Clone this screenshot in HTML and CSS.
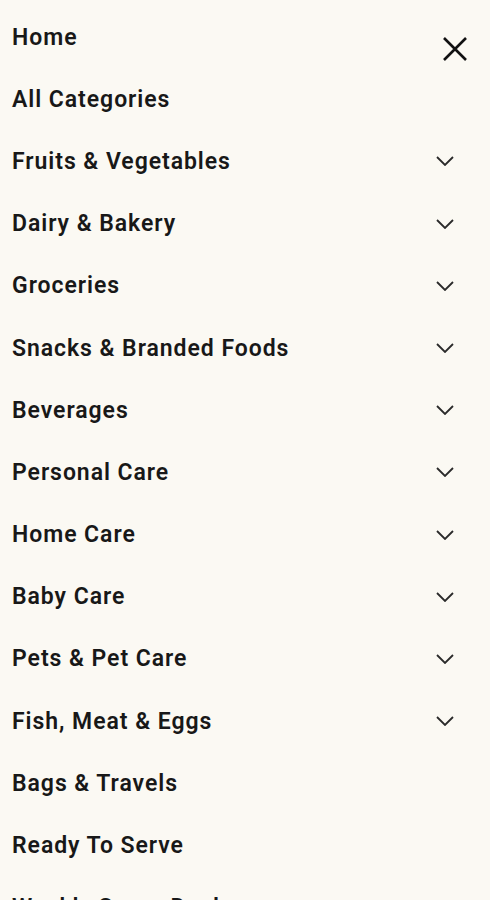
FILE: index.html
```html
<!DOCTYPE html>
<html lang="en">
<head>
<meta charset="utf-8">
<title>Menu</title>
<link rel="stylesheet" href="styles.css">
</head>
<body>
<nav class="drawer">
  <button class="close" aria-label="Close">
    <svg viewBox="0 0 26 26" width="26" height="26"><path d="M2 2 L24 24 M24 2 L2 24" stroke="#111" stroke-width="2.6" fill="none" stroke-linecap="butt"/></svg>
  </button>
  <ul class="menu">
    <li class="item"><span>Home</span></li>
    <li class="item"><span>All Categories</span></li>
    <li class="item"><span>Fruits &amp; Vegetables</span><svg class="chev" viewBox="0 0 18 10"><path d="M1 1 L9 9 L17 1"/></svg></li>
    <li class="item"><span>Dairy &amp; Bakery</span><svg class="chev" viewBox="0 0 18 10"><path d="M1 1 L9 9 L17 1"/></svg></li>
    <li class="item"><span>Groceries</span><svg class="chev" viewBox="0 0 18 10"><path d="M1 1 L9 9 L17 1"/></svg></li>
    <li class="item"><span>Snacks &amp; Branded Foods</span><svg class="chev" viewBox="0 0 18 10"><path d="M1 1 L9 9 L17 1"/></svg></li>
    <li class="item"><span>Beverages</span><svg class="chev" viewBox="0 0 18 10"><path d="M1 1 L9 9 L17 1"/></svg></li>
    <li class="item"><span>Personal Care</span><svg class="chev" viewBox="0 0 18 10"><path d="M1 1 L9 9 L17 1"/></svg></li>
    <li class="item"><span>Home Care</span><svg class="chev" viewBox="0 0 18 10"><path d="M1 1 L9 9 L17 1"/></svg></li>
    <li class="item"><span>Baby Care</span><svg class="chev" viewBox="0 0 18 10"><path d="M1 1 L9 9 L17 1"/></svg></li>
    <li class="item"><span>Pets &amp; Pet Care</span><svg class="chev" viewBox="0 0 18 10"><path d="M1 1 L9 9 L17 1"/></svg></li>
    <li class="item"><span>Fish, Meat &amp; Eggs</span><svg class="chev" viewBox="0 0 18 10"><path d="M1 1 L9 9 L17 1"/></svg></li>
    <li class="item"><span>Bags &amp; Travels</span></li>
    <li class="item"><span>Ready To Serve</span></li>
    <li class="item"><span>Weekly Super Deals</span></li>
  </ul>
</nav>
</body>
</html>
```
FILE: styles.css
```css
html, body {
  margin: 0;
  padding: 0;
  background: #fbf9f3;
  overflow: hidden;
}
.drawer {
  position: relative;
  height: 900px;
  font-family: Roboto, "Liberation Sans", sans-serif;
  color: #181818;
}
.close {
  position: absolute;
  top: 36px;
  left: 442px;
  width: 26px;
  height: 26px;
  padding: 0;
  border: 0;
  background: none;
}
.close svg { display: block; }
.menu {
  list-style: none;
  margin: 0;
  padding: 6px 0 0 12px;
}
.item {
  display: flex;
  align-items: center;
  justify-content: space-between;
  height: 62.2px;
  padding-right: 36px;
  font-size: 23px;
  font-weight: 600;
  letter-spacing: 0.95px;
}
.chev {
  width: 18px;
  height: 10px;
  fill: none;
  stroke: #2a2a2a;
  stroke-width: 1.8;
  margin-top: 0;
}
```
